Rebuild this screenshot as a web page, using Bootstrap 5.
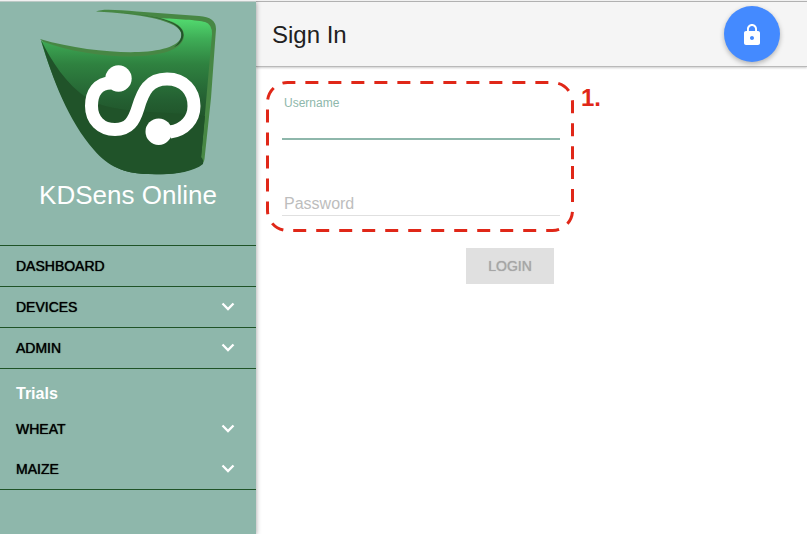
<!DOCTYPE html>
<html lang="en">
<head>
<meta charset="utf-8">
<meta name="viewport" content="width=device-width, initial-scale=1">
<title>KDSens Online - Sign In</title>
<link href="https://cdn.jsdelivr.net/npm/bootstrap@5.3.0/dist/css/bootstrap.min.css" rel="stylesheet">
<style>
  :root { --sage: #8eb7ab; --forest: #1f5327; }
  body { font-family: "Liberation Sans", Arial, sans-serif; border-top: 1px solid #f1f1f1; }
  .app-shell { border-top: 1px solid #b4b4b4; }
  .side-panel { width: 256px; background: var(--sage); box-shadow: 0 1px 5px rgba(0,0,0,.4); z-index: 2; margin-top: -1px; border-top: 1px solid #bcc9c5; }
  .brand-block { height: 243px; padding-top: 6px; }
  .brand-name { font-size: 26px; line-height: 30px; }
  .menu-item { height: 40px; padding: 0 20px 0 16px; font-size: 14px; color: #000; background: none; border: 0; }
  .medium-text { text-shadow: 0 0 1px currentColor; }
  .ruled { border-top: 1px solid var(--forest); }
  .ruled-end { border-bottom: 1px solid var(--forest); }
  .menu-heading { height: 40px; padding: 10px 16px 0; font-size: 16px; line-height: 30px; }
  .top-bar { height: 65px; padding: 0 27px 0 16px; background: #f5f5f5; border-bottom: 1px solid #b9b9b9; box-shadow: 0 1px 2px rgba(0,0,0,.2); }
  .top-bar h1 { padding-top: 2px; font-size: 24px; color: #212121; }
  .lock-btn { width: 56px; height: 56px; background: #448aff; border: 0; box-shadow: 0 2px 5px rgba(0,0,0,.28); }
  .sign-in { max-width: 308px; margin: 14px 0 0 10px; }
  .field-group { padding: 14px 14px 15px 16px; }
  .field-group label { padding-left: 2px; }
  .user-label { font-size: 12px; line-height: 16px; color: var(--sage); }
  .line-input { height: 29px; padding: 0 2px; border: 0; border-radius: 0; background: none; font-size: 16px; outline: 0; }
  .user-input { border-bottom: 2px solid var(--sage); }
  .pass-label { margin-top: 52px; font-size: 16px; line-height: 24px; color: #bdbdbd; }
  .pass-input { margin-top: -29px; border-bottom: 1px solid #e0e0e0; }
  .field-group:has(.pass-input:not(:placeholder-shown)) .pass-label { color: transparent; }
  .callout-frame { overflow: visible; pointer-events: none; }
  .callout-number { left: 100%; top: 3px; margin-left: 7px; font-size: 24px; line-height: 28px; color: #e02718; }
  .login-btn { width: 88px; height: 36px; margin: 17px 20px 0 0; font-size: 14px; color: #a6a6a6; background: #e0e0e0; border: 0; }
</style>
<script src="https://cdn.jsdelivr.net/npm/bootstrap@5.3.0/dist/js/bootstrap.bundle.min.js"></script>
</head>
<body class="min-vh-100 d-flex flex-column bg-white">
<div class="app-shell d-flex flex-grow-1">
  <nav class="side-panel flex-shrink-0 position-relative" aria-label="Main">
    <div class="brand-block d-flex flex-column align-items-center text-white">
      <svg width="180" height="172" viewBox="38 8 180 172" role="img" aria-label="KDSens logo">
        <defs>
          <linearGradient id="bodyFill" x1="0" y1="18" x2="0" y2="120" gradientUnits="userSpaceOnUse">
            <stop offset="0" stop-color="#53dc70"/><stop offset=".2" stop-color="#3fae57"/><stop offset=".45" stop-color="#2f8240"/><stop offset=".8" stop-color="#246032"/><stop offset="1" stop-color="#205329"/>
          </linearGradient>
        </defs>
        <path fill="#478744" d="M96 11.5C102 8.5 118 10 137 11.5L199 16Q216 17 216 29L211 98L204.500 159Q204 163 200 165L150 150L40 39C74 49 112 53 139 52C164 51 181 45 181.500 35C181 20 139 14 96 11.500Z"/>
        <path fill="#205329" d="M118 12.500C149 15 184 20 183.500 35C183 41 179 45 174 47C181 42 182 36 181 32C176 19 146 15 118 12.500Z"/>
        <path fill="url(#bodyFill)" d="M160 18C176 19 198 20 205 22Q212 24 212 34L201 159Q202 165 196 167C183 174 164 175 148 174C123 174 109 165 96 151C70 121 53 80 41 41C72 53 113 58 143 56C169 54 184 47 184 35C184 26 173 21 160 18Z"/>
        <path fill="#205329" d="M41 40C52 62 65 83 88 99C113 114 160 111 205 116L201 157Q204 160 203 164C192 173 170 175 152 174C123 174 108 166 94 150C68 120 53 80 41 40Z"/>
        <path fill="none" stroke="#fff" stroke-width="13" d="M111 83C98 83 91.500 93 91.500 106C91.500 120 101 129.500 115 129.500C129 129.500 134 121 138 108C143 91 149 79 167 79C184 79 194 91 194 106C194 119 185 130 170 132"/>
        <circle cx="118.500" cy="78.500" r="13.200" fill="#fff"/><circle cx="158.700" cy="131.700" r="13.200" fill="#fff"/>
      </svg>
      <div class="brand-name">KDSens Online</div>
    </div>
    <div class="ruled"><a href="#dashboard" class="menu-item medium-text d-flex align-items-center text-decoration-none">DASHBOARD</a></div>
    <div class="ruled"><button type="button" class="menu-item w-100 d-flex align-items-center justify-content-between"><span class="medium-text">DEVICES</span><svg width="16" height="16" viewBox="0 0 16 16" aria-hidden="true"><path d="M2.500 4.500L8 10L13.500 4.500" fill="none" stroke="#fff" stroke-width="2.300"/></svg></button></div>
    <div class="ruled"><button type="button" class="menu-item w-100 d-flex align-items-center justify-content-between"><span class="medium-text">ADMIN</span><svg width="16" height="16" viewBox="0 0 16 16" aria-hidden="true"><path d="M2.500 4.500L8 10L13.500 4.500" fill="none" stroke="#fff" stroke-width="2.300"/></svg></button></div>
    <div class="ruled ruled-end">
      <h2 class="menu-heading text-white fw-bold m-0">Trials</h2>
      <button type="button" class="menu-item w-100 d-flex align-items-center justify-content-between"><span class="medium-text">WHEAT</span><svg width="16" height="16" viewBox="0 0 16 16" aria-hidden="true"><path d="M2.500 4.500L8 10L13.500 4.500" fill="none" stroke="#fff" stroke-width="2.300"/></svg></button>
      <button type="button" class="menu-item w-100 d-flex align-items-center justify-content-between"><span class="medium-text">MAIZE</span><svg width="16" height="16" viewBox="0 0 16 16" aria-hidden="true"><path d="M2.500 4.500L8 10L13.500 4.500" fill="none" stroke="#fff" stroke-width="2.300"/></svg></button>
    </div>
  </nav>
  <div class="flex-grow-1">
    <header class="top-bar d-flex align-items-center justify-content-between">
      <h1 class="fw-normal mb-0">Sign In</h1>
      <button type="button" class="lock-btn rounded-circle d-flex align-items-center justify-content-center p-0" aria-label="Sign in">
        <svg width="24" height="24" viewBox="0 -1 24 24" aria-hidden="true"><path fill="#fff" d="M18 8h-1V6c0-2.760-2.240-5-5-5S7 3.240 7 6v2H6c-1.100 0-2 .9-2 2v10c0 1.100.9 2 2 2h12c1.100 0 2-.9 2-2V10c0-1.100-.9-2-2-2zm-6 9c-1.100 0-2-.9-2-2s.9-2 2-2 2 .9 2 2-.9 2-2 2zm3.100-9H8.900V6c0-1.710 1.390-3.100 3.100-3.100s3.100 1.390 3.100 3.100v2z"/></svg>
      </button>
    </header>
    <main>
      <form class="sign-in">
        <div class="field-group position-relative">
          <label for="username" class="user-label d-block">Username</label>
          <input id="username" type="text" class="line-input user-input d-block w-100" autocomplete="off">
          <label for="password" class="pass-label d-block">Password</label>
          <input id="password" type="password" class="line-input pass-input d-block w-100" placeholder=" ">
          <svg class="callout-frame position-absolute top-0 start-0 w-100 h-100" viewBox="0 0 308 150" aria-hidden="true"><path fill="none" stroke="#e02718" stroke-width="3" stroke-dasharray="13 10" d="M306.500 85V129.500A20 20 0 0 1 286.500 149.500H21.500A20 20 0 0 1 1.500 129.500V21.500A20 20 0 0 1 21.500 1.500H286.500A20 20 0 0 1 306.500 21.500V85"/></svg>
          <span class="callout-number position-absolute fw-bold">1.</span>
        </div>
        <div class="d-flex justify-content-end"><button type="submit" class="login-btn medium-text p-0" disabled>LOGIN</button></div>
      </form>
    </main>
  </div>
</div>
</body>
</html>
